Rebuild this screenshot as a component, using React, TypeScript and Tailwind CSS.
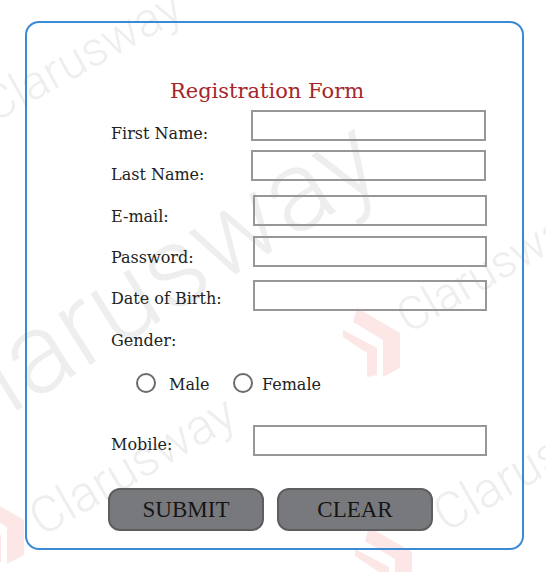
import React from 'react';

const serif = { fontFamily: '"DejaVu Serif", "Liberation Serif", serif' };

const rows = [
  { label: 'First Name:', row: 'h-[40px]', labelPad: 'pt-[14px]', input: 'ml-[0px] w-[235px]' },
  { label: 'Last Name:', row: 'h-[45px]', labelPad: 'pt-[15px]', input: 'ml-[0px] w-[235px]' },
  { label: 'E-mail:', row: 'h-[41px]', labelPad: 'pt-[12px]', input: 'ml-[2px] w-[234px]' },
  { label: 'Password:', row: 'h-[44px]', labelPad: 'pt-[12px]', input: 'ml-[2px] w-[234px]' },
  { label: 'Date of Birth:', row: 'h-[50px]', labelPad: 'pt-[9px]', input: 'ml-[2px] w-[234px]' },
];

// faded watermark logo: two isometric chevrons
const Logo = ({ className }: { className: string }) => (
  <svg viewBox="0 0 60 72" className={className}>
    <polygon points="17,3 60,28 60,63 43,72 43,35 13,17" fill="#fce6e6" />
    <polygon points="3,25 37,43 37,70 27,72 27,48 3,32" fill="#fce6e6" />
  </svg>
);

const Watermarks = () => (
  <div className="pointer-events-none absolute inset-0 overflow-hidden font-light text-[#eeeeee]" style={{ fontFamily: 'Roboto, "Open Sans", sans-serif' }}>
    <div className="absolute left-[-2px] top-[82px] origin-bottom-left -rotate-[29deg] text-[48px] leading-none">Clarusway</div>
    <div className="absolute left-[-44px] top-[356px] origin-bottom-left -rotate-[32deg] text-[114px] leading-none">Clarusway</div>
    <div className="absolute left-[412px] top-[294px] origin-bottom-left -rotate-[30deg] text-[46px] leading-none">Clarusway</div>
    <div className="absolute left-[46px] top-[494px] origin-bottom-left -rotate-[30deg] text-[50px] leading-none">Clarusway</div>
    <div className="absolute left-[450px] top-[490px] origin-bottom-left -rotate-[30deg] text-[50px] leading-none">Clarusway</div>
    <Logo className="absolute left-[340px] top-[305px] h-[72px] w-[60px]" />
    <Logo className="absolute left-[-36px] top-[492px] h-[72px] w-[60px]" />
    <Logo className="absolute left-[352px] top-[524px] h-[72px] w-[60px]" />
  </div>
);

const Radio = () => (
  <span className="inline-block h-[20px] w-[20px] shrink-0 rounded-full border-2 border-[#6b6b6b] bg-white" />
);

export default function App() {
  return (
    <div className="relative h-[572px] w-[546px] overflow-hidden bg-white pl-[25px] pt-[21px]">
      <Watermarks />
      <div className="relative h-[529px] w-[499px] rounded-[14px] border-2 border-[#3a8ad6] pt-[54px]">
        <h1 className="pr-[15px] text-center text-[21px] leading-[28px] text-[#a5262a]" style={serif}>
          Registration Form
        </h1>

        <div className="mt-[5px] pl-[84px] text-[16px] leading-[20px] text-[#222]" style={serif}>
          {rows.map((r) => (
            <div key={r.label} className={`flex items-start ${r.row}`}>
              <label className={`w-[140px] shrink-0 ${r.labelPad}`}>{r.label}</label>
              <input type="text" className={`h-[31px] border-2 border-[#979797] bg-transparent outline-none ${r.input}`} />
            </div>
          ))}

          <div className="h-[43px] pt-[1px]">
            <label>Gender:</label>
          </div>

          <div className="flex h-[52px] items-start">
            <div className="ml-[25px] flex h-[20px] items-center">
              <Radio />
              <span className="ml-[13px] w-[64px] pt-[3px]">Male</span>
              <Radio />
              <span className="ml-[9px] pt-[3px]">Female</span>
            </div>
          </div>

          <div className="flex h-[63px] items-start">
            <label className="w-[140px] shrink-0 pt-[10px]">Mobile:</label>
            <input type="text" className="ml-[2px] h-[31px] w-[234px] border-2 border-[#979797] bg-transparent outline-none" />
          </div>

          <div className="-ml-[3px] flex gap-[13px]" style={{ fontFamily: '"Liberation Serif", serif' }}>
            <button className="h-[43px] w-[156px] rounded-[12px] border-2 border-[#5e5e60] bg-[#78797c] pt-[1px] text-[23px] text-[#151515]">
              SUBMIT
            </button>
            <button className="h-[43px] w-[156px] rounded-[12px] border-2 border-[#5e5e60] bg-[#78797c] pt-[1px] text-[23px] text-[#151515]">
              CLEAR
            </button>
          </div>
        </div>
      </div>
    </div>
  );
}
